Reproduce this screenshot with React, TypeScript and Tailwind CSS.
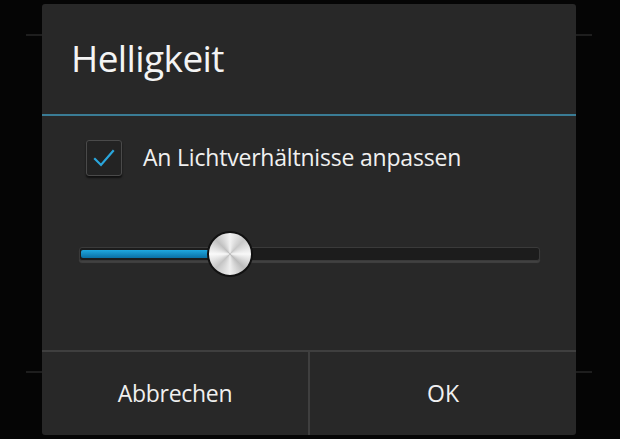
import React from "react";

export default function App() {
  const font = { fontFamily: '"Open Sans", "Noto Sans", sans-serif' };
  return (
    <div className="relative w-[620px] h-[439px] bg-[#050505] overflow-hidden" style={font}>
      <div className="absolute left-[26px] top-[34px] w-[566px] h-[2px] bg-[#1e1e1e]" />
      <div className="absolute left-[26px] top-[371px] w-[566px] h-[2px] bg-[#1e1e1e]" />
      <div className="absolute left-[42px] top-[4px] w-[534px] h-[431px] bg-[#282828] rounded-[3px] flex flex-col">
        <div className="h-[110px] flex items-center pl-[29px] pb-[2px]">
          <span className="text-[37px] text-[#f4f4f4] tracking-[-0.6px]">Helligkeit</span>
        </div>
        <div className="h-[2px] bg-[#3a7c95]" />
        <div className="flex-1 flex flex-col">
          <div className="flex items-center pl-[44px] pt-[11px] h-[72px]">
            <div className="w-[36px] h-[36px] rounded-[3px] bg-[#232323] border border-[#4a4a4a] shadow-[0_2px_2px_rgba(0,0,0,0.6)] flex items-center justify-center">
              <svg width="24" height="24" viewBox="0 0 24 24">
                <path d="M3 13 L9 19 L21 5" fill="none" stroke="#2aa6dc" strokeWidth="2.2" strokeLinecap="square" />
              </svg>
            </div>
            <span className="ml-[21px] text-[23px] text-[#f0f0f0] tracking-[-0.2px]">An Lichtverhältnisse anpassen</span>
          </div>
          <div className="relative ml-[37px] mr-[36px] mt-[59px] h-[14px]">
            <div className="absolute inset-0 rounded-[3px] bg-[#1c1c1c] border border-[#3a3a3a] shadow-[0_2px_1px_rgba(90,90,90,0.5)]" />
            <div className="absolute left-[2px] top-[3px] h-[8px] w-[140px] rounded-[2px] bg-gradient-to-b from-[#1fa8e0] to-[#0a6fa3]" />
            <div className="absolute left-[128px] top-[-16px] w-[46px] h-[46px] rounded-full border-2 border-[#111] bg-[conic-gradient(from_0deg,#f2f2f2,#c8c8c8,#f8f8f8,#bcbcbc,#efefef,#c4c4c4,#fafafa,#c0c0c0,#f2f2f2)]" />
          </div>
          <div className="flex-1" />
        </div>
        <div className="h-[2px] bg-[#3f3f3f]" />
        <div className="h-[83px] flex">
          <div className="flex-1 flex items-center justify-center text-[23px] text-[#f0f0f0] tracking-[-0.3px]">Abbrechen</div>
          <div className="w-[2px] bg-[#3f3f3f]" />
          <div className="flex-1 flex items-center justify-center text-[23px] text-[#f0f0f0]">OK</div>
        </div>
      </div>
    </div>
  );
}
